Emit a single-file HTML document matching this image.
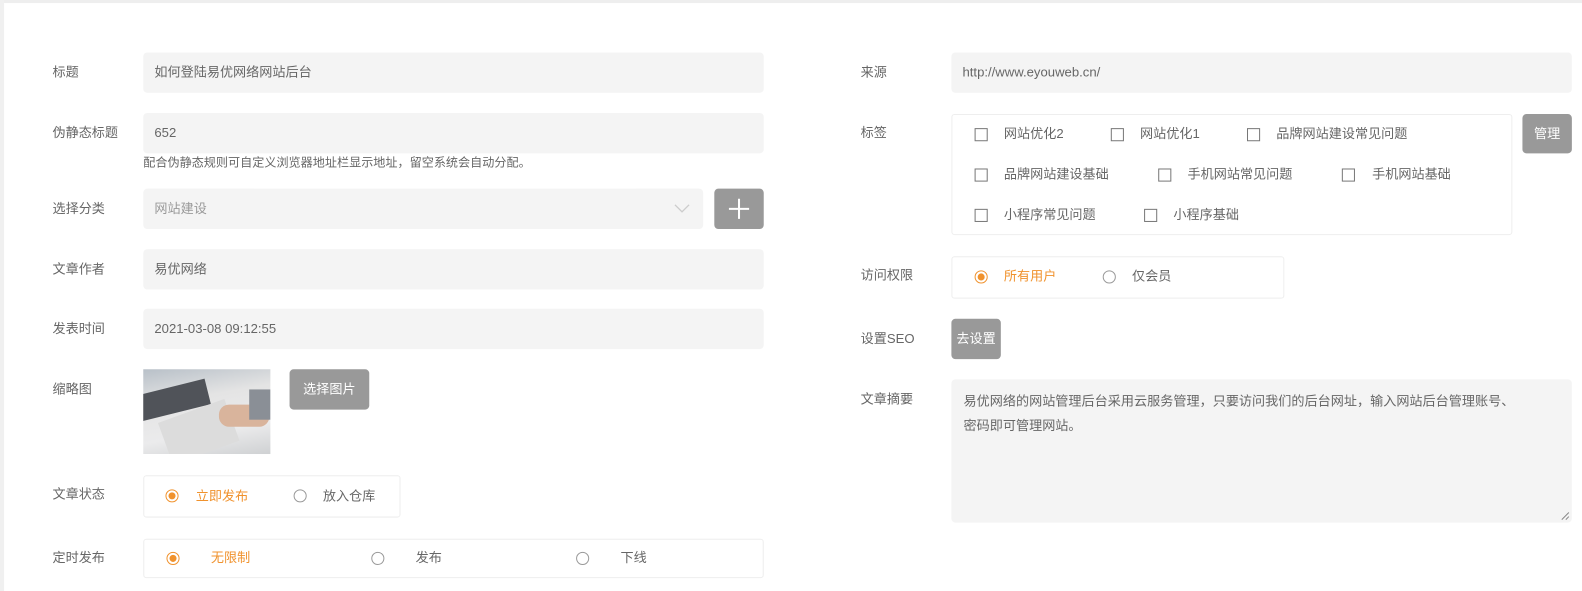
<!DOCTYPE html>
<html><head><meta charset="utf-8"><style>
*{margin:0;padding:0;box-sizing:border-box}
body{width:1582px;height:586px;background:#fff;font-family:"Liberation Sans","Noto Sans CJK SC",sans-serif;font-size:13px;color:#666;position:relative;overflow:hidden}
#w{position:absolute;left:0;top:0;width:1568px;height:581px;transform:scale(1.0089);transform-origin:0 0}
.a{position:absolute}
.lbl{position:absolute;font-size:13px;color:#666;line-height:20px}
.inp{position:absolute;background:#f4f4f4;border-radius:4px;height:40px;line-height:40px;padding-left:11px;color:#666;font-size:13px}
.btn{position:absolute;background:#999;color:#fff;border-radius:4px;text-align:center;font-size:13px}
.box{position:absolute;border:1px solid #eee;border-radius:3px}
.rad{position:absolute;width:13px;height:13px;border:1px solid #999;border-radius:50%}
.rad.on{border-color:#f0922d}
.rad.on::after{content:"";position:absolute;left:2px;top:2px;width:7px;height:7px;border-radius:50%;background:#f0922d}
.chk{position:absolute;width:13px;height:13px;border:1px solid #777}
.t{position:absolute;line-height:20px;font-size:13px;color:#666}
.or{color:#f0922d}
</style></head><body><div id="w">
<div class="a" style="left:0;top:0;width:1582px;height:3px;background:#eee"></div>
<div class="a" style="left:0;top:0;width:4px;height:586px;background:#f0f0f0"></div>

<div class="lbl" style="left:52px;top:62px">标题</div>
<div class="inp" style="left:142px;top:52px;width:615px">如何登陆易优网络网站后台</div>
<div class="lbl" style="left:52px;top:122px">伪静态标题</div>
<div class="inp" style="left:142px;top:112px;width:615px">652</div>
<div class="t" style="left:142px;top:151px;font-size:12px">配合伪静态规则可自定义浏览器地址栏显示地址，留空系统会自动分配。</div>
<div class="lbl" style="left:52px;top:197px">选择分类</div>
<div class="inp" style="left:142px;top:187px;width:555px;color:#999">网站建设</div>
<svg class="a" style="left:668px;top:202px" width="16" height="10"><path d="M1 1 L8 8 L15 1" stroke="#ccc" stroke-width="1.3" fill="none"/></svg>
<div class="btn" style="left:708px;top:187px;width:49px;height:40px"><svg width="49" height="40"><path d="M24.5 10V30M14.5 20H34.5" stroke="#fff" stroke-width="2"/></svg></div>
<div class="lbl" style="left:52px;top:257px">文章作者</div>
<div class="inp" style="left:142px;top:247px;width:615px">易优网络</div>
<div class="lbl" style="left:52px;top:316px">发表时间</div>
<div class="inp" style="left:142px;top:306px;width:615px">2021-03-08 09:12:55</div>
<div class="lbl" style="left:52px;top:376px">缩略图</div>
<div class="a" style="left:142px;top:366px;width:126px;height:84px;overflow:hidden;background:linear-gradient(170deg,#b8c0c8 0%,#e4e4e4 35%,#ebebec 70%,#cfd1d3 100%)">
<div class="a" style="left:-10px;top:18px;width:75px;height:26px;background:#505359;transform:rotate(-14deg)"></div>
<div class="a" style="left:20px;top:40px;width:70px;height:44px;background:#dcdcdc;transform:rotate(-20deg)"></div>
<div class="a" style="left:75px;top:35px;width:50px;height:22px;background:#d9b49c;border-radius:10px"></div>
<div class="a" style="left:105px;top:20px;width:21px;height:30px;background:#8a8f96"></div>
</div>
<div class="btn" style="left:287px;top:366px;width:79px;height:40px;line-height:40px">选择图片</div>
<div class="lbl" style="left:52px;top:480px">文章状态</div>
<div class="box" style="left:142px;top:471px;width:255px;height:42px"></div>
<div class="rad on" style="left:164px;top:485px"></div><div class="t or" style="left:194px;top:482px">立即发布</div>
<div class="rad" style="left:291px;top:485px"></div><div class="t" style="left:320px;top:482px">放入仓库</div>
<div class="lbl" style="left:52px;top:543px">定时发布</div>
<div class="box" style="left:142px;top:534px;width:615px;height:39px"></div>
<div class="rad on" style="left:165px;top:547px"></div><div class="t or" style="left:209px;top:543px">无限制</div>
<div class="rad" style="left:368px;top:547px"></div><div class="t" style="left:412px;top:543px">发布</div>
<div class="rad" style="left:571px;top:547px"></div><div class="t" style="left:615px;top:543px">下线</div>

<div class="lbl" style="left:853px;top:62px">来源</div>
<div class="inp" style="left:943px;top:52px;width:615px">http://www.eyouweb.cn/</div>
<div class="lbl" style="left:853px;top:122px">标签</div>
<div class="box" style="left:943px;top:113px;width:556px;height:120px"></div>
<div class="chk" style="left:966px;top:127px"></div><div class="t" style="left:995px;top:123px">网站优化2</div>
<div class="chk" style="left:1101px;top:127px"></div><div class="t" style="left:1130px;top:123px">网站优化1</div>
<div class="chk" style="left:1236px;top:127px"></div><div class="t" style="left:1265px;top:123px">品牌网站建设常见问题</div>
<div class="chk" style="left:966px;top:167px"></div><div class="t" style="left:995px;top:163px">品牌网站建设基础</div>
<div class="chk" style="left:1148px;top:167px"></div><div class="t" style="left:1177px;top:163px">手机网站常见问题</div>
<div class="chk" style="left:1330px;top:167px"></div><div class="t" style="left:1360px;top:163px">手机网站基础</div>
<div class="chk" style="left:966px;top:207px"></div><div class="t" style="left:995px;top:203px">小程序常见问题</div>
<div class="chk" style="left:1134px;top:207px"></div><div class="t" style="left:1163px;top:203px">小程序基础</div>
<div class="btn" style="left:1509px;top:113px;width:49px;height:39px;line-height:39px">管理</div>
<div class="lbl" style="left:853px;top:263px">访问权限</div>
<div class="box" style="left:943px;top:254px;width:330px;height:42px"></div>
<div class="rad on" style="left:966px;top:268px"></div><div class="t or" style="left:995px;top:264px">所有用户</div>
<div class="rad" style="left:1093px;top:268px"></div><div class="t" style="left:1122px;top:264px">仅会员</div>
<div class="lbl" style="left:853px;top:326px">设置SEO</div>
<div class="btn" style="left:943px;top:316px;width:49px;height:40px;line-height:40px">去设置</div>
<div class="lbl" style="left:853px;top:386px">文章摘要</div>
<div class="a" style="left:943px;top:376px;width:615px;height:142px;background:#f4f4f4;border-radius:4px;padding:10px 12px;line-height:24px;font-size:13px;color:#666;white-space:nowrap">易优网络的网站管理后台采用云服务管理，只要访问我们的后台网址，输入网站后台管理账号、<br>密码即可管理网站。</div>
<svg class="a" style="left:1547px;top:507px" width="9" height="9"><path d="M1 8L8 1M5 8L8 5" stroke="#888" stroke-width="1"/></svg>
</div></body></html>
